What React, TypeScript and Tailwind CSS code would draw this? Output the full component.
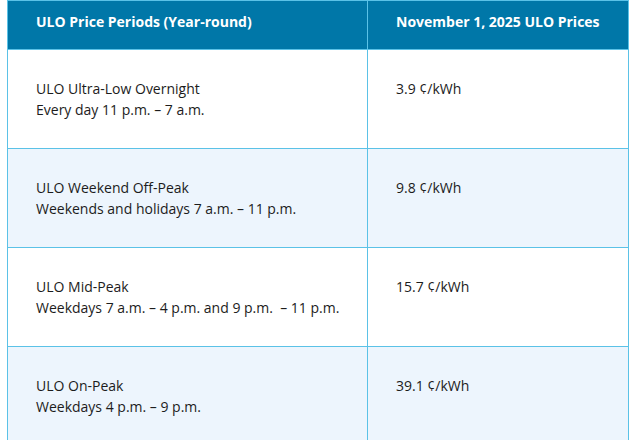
const ROWS = [
  { name: "ULO Ultra-Low Overnight", when: "Every day 11 p.m. – 7 a.m.", price: "3.9 ¢/kWh" },
  { name: "ULO Weekend Off-Peak", when: "Weekends and holidays 7 a.m. – 11 p.m.", price: "9.8 ¢/kWh" },
  { name: "ULO Mid-Peak", when: "Weekdays 7 a.m. – 4 p.m. and 9 p.m.\u00a0 – 11 p.m.", price: "15.7 ¢/kWh" },
  { name: "ULO On-Peak", when: "Weekdays 4 p.m. – 9 p.m.", price: "39.1 ¢/kWh" },
];

export default function App() {
  return (
    <main className="min-h-screen bg-white pl-[7px] font-['Open_Sans',sans-serif] text-[14px] leading-[21px] text-[#1c1c1c]">
      <table className="w-[621px] table-fixed border-collapse">
        <colgroup>
          <col className="w-[360px]" />
          <col className="w-[261px]" />
        </colgroup>
        <thead>
          <tr className="h-[49px] bg-[#0077a8] text-white">
            <th className="border border-[#5bc2e7] pb-[17px] pl-7 pr-2 pt-[10px] text-left align-top font-bold">
              ULO Price Periods (Year-round)
            </th>
            <th className="border border-[#5bc2e7] pb-[17px] pl-7 pr-2 pt-[10px] text-left align-top font-bold">
              November 1, 2025 ULO Prices
            </th>
          </tr>
        </thead>
        <tbody>
          {ROWS.map((r, i) => (
            <tr key={r.name} className={i % 2 === 1 ? "bg-[#edf5fd]" : "bg-white"}>
              <td className="h-[99px] whitespace-nowrap border border-[#5bc2e7] py-7 pl-7 pr-2 align-top">
                <div>{r.name}</div>
                <div>{r.when}</div>
              </td>
              <td className="border border-[#5bc2e7] py-7 pl-7 pr-2 align-top">{r.price}</td>
            </tr>
          ))}
        </tbody>
      </table>
    </main>
  );
}
